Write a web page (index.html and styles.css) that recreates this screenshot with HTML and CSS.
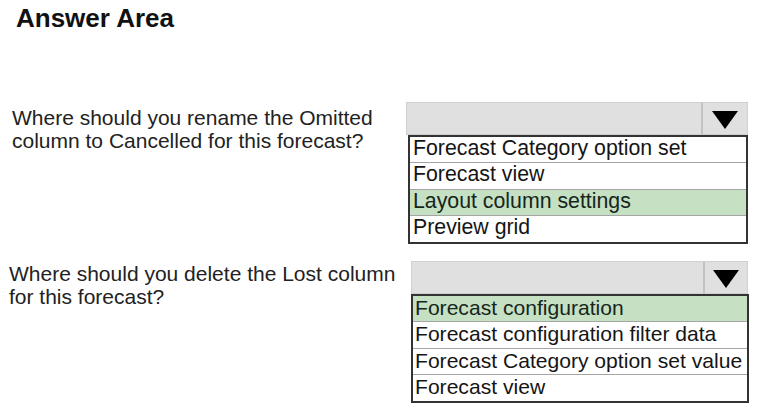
FILE: index.html
```html
<!DOCTYPE html>
<html>
<head>
<meta charset="utf-8">
<link rel="stylesheet" href="styles.css">
</head>
<body>
<h1 class="title">Answer Area</h1>

<div class="question q1">
  <div class="qtext">Where should you rename the Omitted<br>column to Cancelled for this forecast?</div>
  <div class="dd">
    <div class="dd-head">
      <div class="dd-arrow">
        <svg width="26" height="18" viewBox="0 0 26 18"><polygon points="0,0 26,0 13,18" fill="#000"/></svg>
      </div>
    </div>
    <ul class="dd-list">
      <li>Forecast Category option set</li>
      <li>Forecast view</li>
      <li class="sel">Layout column settings</li>
      <li>Preview grid</li>
    </ul>
  </div>
</div>

<div class="question q2">
  <div class="qtext">Where should you delete the Lost column<br>for this forecast?</div>
  <div class="dd">
    <div class="dd-head">
      <div class="dd-arrow">
        <svg width="26" height="18" viewBox="0 0 26 18"><polygon points="0,0 26,0 13,18" fill="#000"/></svg>
      </div>
    </div>
    <ul class="dd-list">
      <li class="sel">Forecast configuration</li>
      <li>Forecast configuration filter data</li>
      <li>Forecast Category option set value</li>
      <li>Forecast view</li>
    </ul>
  </div>
</div>
</body>
</html>
```

FILE: styles.css
```css
* { box-sizing: border-box; }

body {
  margin: 0;
  background: #ffffff;
  color: #1c1c1c;
  font-family: "Liberation Sans", Arial, sans-serif;
}

.title {
  margin: 0;
  padding: 3px 0 0 16px;
  font-size: 26px;
  line-height: 30px;
  font-weight: bold;
  color: #111;
}

.question {
  display: flex;
  align-items: flex-start;
}

.q1 { margin-top: 69px; }
.q2 { margin-top: 17px; }

.qtext {
  font-size: 21px;
  line-height: 23px;
  color: #222;
}

.q1 .qtext { width: 406px; padding: 4px 0 0 12px; }
.q2 .qtext { width: 411px; padding: 1px 0 0 9px; }

.q1 .dd { width: 342px; }
.q2 .dd { width: 338px; }

.dd-head {
  height: 33px;
  background: #e0e0e0;
  border: 1px solid #d0d0d0;
  display: flex;
  justify-content: flex-end;
}

.q2 .dd-head { margin-right: 1px; }

.dd-arrow {
  width: 46px;
  border-left: 2px solid #c2c2c2;
  display: flex;
  align-items: center;
  justify-content: center;
  padding-top: 2px;
}

.q2 .dd-arrow { width: 44px; }

.dd-list {
  list-style: none;
  margin: 0;
  padding: 0;
  border: 2px solid #333;
  background: #fff;
}

.q1 .dd-list { margin-left: 2px; }

.dd-list li {
  height: 26.25px;
  line-height: 23px;
  padding-left: 3px;
  font-size: 21.3px;
  color: #151515;
  border-bottom: 1px solid #a5a5a5;
  white-space: nowrap;
}

.q2 .dd-list li {
  font-size: 21.1px;
  padding-left: 2px;
}

.dd-list li:last-child { border-bottom: none; }

.dd-list li.sel {
  background: #c5e0c3;
  color: #16261a;
}
```
